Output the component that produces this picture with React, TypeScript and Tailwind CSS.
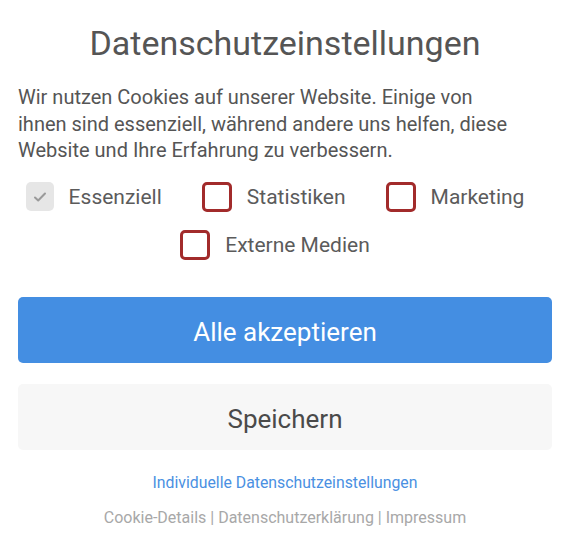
import React from "react";

function Box({ disabled }: { disabled?: boolean }) {
  if (disabled) {
    return (
      <span className="flex h-[29px] w-[28px] shrink-0 items-center justify-center rounded-[5px] bg-[#e6e6e6]">
        <svg width="16" height="16" viewBox="0 0 16 16" fill="none">
          <path d="M3 8.5l3.2 3L13 4.5" stroke="#9a9a9a" strokeWidth="2" strokeLinecap="round" strokeLinejoin="round" />
        </svg>
      </span>
    );
  }
  return <span className="block h-[30px] w-[30px] shrink-0 rounded-[5px] border-[3px] border-[#a22b2b] bg-white" />;
}

function Item({ label, disabled }: { label: string; disabled?: boolean }) {
  return (
    <label className="mr-[23px] flex items-center gap-[15px]">
      <Box disabled={disabled} />
      <span className="text-[21px] leading-[30px] text-[#5b5b5b]">{label}</span>
    </label>
  );
}

export default function App() {
  return (
    <div className="min-h-[544px] w-[570px] bg-white px-[18px] pt-[21px] [font-family:Roboto,'Liberation_Sans',sans-serif]">
      <h1 className="text-center text-[34px] font-normal leading-[44px] text-[#555555]">Datenschutzeinstellungen</h1>
      <p className="mt-[19px] text-[20px] leading-[26.5px] text-[#555555]">
        Wir nutzen Cookies auf unserer Website. Einige von
        <br />
        ihnen sind essenziell, während andere uns helfen, diese
        <br />
        Website und Ihre Erfahrung zu verbessern.
      </p>
      <div className="mt-[18px] flex flex-wrap justify-center gap-x-[17px] gap-y-[18px] pl-[3px]">
        <Item label="Essenziell" disabled />
        <Item label="Statistiken" />
        <Item label="Marketing" />
        <Item label="Externe Medien" />
      </div>
      <button className="mt-[37px] flex h-[66px] w-full items-center justify-center rounded-[5px] bg-[#448ee2] pt-[6px] text-[26px] text-white">
        Alle akzeptieren
      </button>
      <button className="mt-[21px] flex h-[66px] w-full items-center justify-center rounded-[5px] bg-[#f7f7f7] pt-[6px] text-[26px] text-[#4a4a4a]">
        Speichern
      </button>
      <div className="mt-[23px] text-center text-[15.8px] leading-[20px] text-[#4a90e2]">Individuelle Datenschutzeinstellungen</div>
      <div className="mt-[15px] text-center text-[16px] leading-[20px] text-[#a8a8a8]">
        Cookie-Details | Datenschutzerklärung | Impressum
      </div>
    </div>
  );
}
